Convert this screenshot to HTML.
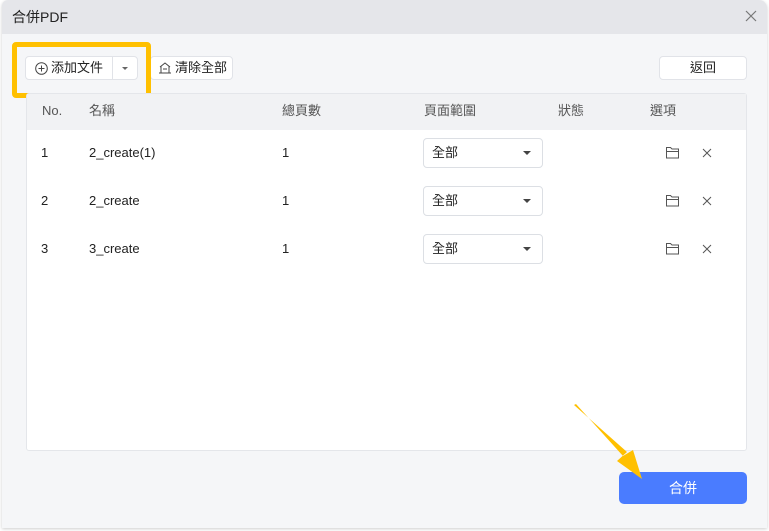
<!DOCTYPE html>
<html><head><meta charset="utf-8"><style>
*{box-sizing:border-box;margin:0;padding:0}
body{width:769px;height:531px;background:#fff;position:relative;overflow:hidden;font-family:"Liberation Sans","Noto Sans CJK TC",sans-serif;font-size:13px;color:#222}
.dlg{position:absolute;left:2px;top:0;width:765px;height:528px;background:#f5f6f8;border-radius:6px 8px 0 0;box-shadow:0 1px 3px rgba(0,0,0,.2);overflow:hidden}
.title{height:34px;background:#e5e6ea;padding:0 0 0 10px;line-height:34px;font-size:14px;color:#222}
.x{position:absolute;right:10px;top:10px;width:12px;height:12px}
.abs{position:absolute;line-height:16px}
.btn{position:absolute;background:#fff;border:1px solid #e1e3e8;border-radius:4px;font-size:13px;color:#222}
.tbl{position:absolute;left:26px;top:93px;width:721px;height:358px;background:#fff;border:1px solid #e4e6ea;border-radius:3px}
.hd{height:36px;background:#f1f2f4;color:#555}
.sel{position:absolute;width:120px;height:30px;border:1px solid #dcdfe4;border-radius:4px;background:#fff;padding-left:8px;line-height:28px}
.sel:after{content:"";position:absolute;right:11px;top:12px;border:4px solid transparent;border-top:4px solid #444;border-bottom:0}
.go{position:absolute;left:619px;top:472px;width:128px;height:32px;background:#4a7cff;border-radius:5px;color:#fff;text-align:center;line-height:32px;font-size:14px}
</style></head><body>
<div class="dlg">
<div class="title">合併PDF</div>
<svg class="x" viewBox="0 0 12 12"><path d="M1 1L11 11M11 1L1 11" stroke="#777" stroke-width="1.2"/></svg>
</div>
<div class="btn" style="left:25px;top:56px;width:113px;height:24px"></div>
<div class="abs" style="left:112px;top:57px;width:1px;height:22px;background:#e1e3e8"></div>
<svg class="abs" style="left:35px;top:62px" width="13" height="13" viewBox="0 0 13 13"><circle cx="6.5" cy="6.5" r="5.8" fill="none" stroke="#444" stroke-width="1"/><path d="M6.5 3.5v6M3.5 6.5h6" stroke="#444"/></svg>
<div class="abs" style="left:51px;top:60px">添加文件</div>
<div class="abs" style="left:122px;top:67px;border:3px solid transparent;border-top:3px solid #666;border-bottom:0"></div>
<div class="btn" style="left:150px;top:56px;width:83px;height:24px"></div>
<svg class="abs" style="left:158px;top:61px" width="14" height="13" viewBox="0 0 14 13"><path d="M2 6L7 2L12 6M3 5.5V12H11V5.5M1 12H13M5 8h4" fill="none" stroke="#444"/></svg>
<div class="abs" style="left:175px;top:60px">清除全部</div>
<div class="abs" style="left:12px;top:42px;width:139px;height:56px;border:5px solid #ffc000;border-radius:4px"></div>
<div class="btn" style="left:659px;top:56px;width:88px;height:24px;text-align:center;line-height:22px">返回</div>
<div class="tbl"><div class="hd"></div></div>
<div class="abs" style="left:42px;top:103px;color:#555">No.</div>
<div class="abs" style="left:89px;top:103px;color:#555">名稱</div>
<div class="abs" style="left:282px;top:103px;color:#555">總頁數</div>
<div class="abs" style="left:424px;top:103px;color:#555">頁面範圍</div>
<div class="abs" style="left:558px;top:103px;color:#555">狀態</div>
<div class="abs" style="left:650px;top:103px;color:#555">選項</div>

<div class="abs" style="left:41px;top:145px">1</div><div class="abs" style="left:89px;top:145px">2_create(1)</div><div class="abs" style="left:282px;top:145px">1</div>
<div class="sel" style="left:423px;top:138px">全部</div>
<div class="abs" style="left:41px;top:193px">2</div><div class="abs" style="left:89px;top:193px">2_create</div><div class="abs" style="left:282px;top:193px">1</div>
<div class="sel" style="left:423px;top:186px">全部</div>
<div class="abs" style="left:41px;top:241px">3</div><div class="abs" style="left:89px;top:241px">3_create</div><div class="abs" style="left:282px;top:241px">1</div>
<div class="sel" style="left:423px;top:234px">全部</div>

<svg class="abs" style="left:665px;top:146px" width="50" height="112" viewBox="0 0 50 112">
<g fill="none" stroke="#555" stroke-width="1">
<path d="M1.5 1.5h4l1.5 1.5h6.5v9h-12zM1.5 5.5h12"/>
<path d="M38 3l8 8M46 3l-8 8"/>
<path d="M1.5 49.5h4l1.5 1.5h6.5v9h-12zM1.5 53.5h12"/>
<path d="M38 51l8 8M46 51l-8 8"/>
<path d="M1.5 97.5h4l1.5 1.5h6.5v9h-12zM1.5 101.5h12"/>
<path d="M38 99l8 8M46 99l-8 8"/>
</g></svg>
<div class="go">合併</div>
<svg class="abs" style="left:0;top:0" width="769" height="531" viewBox="0 0 769 531">
<path d="M574 405L627 452L617 461L642 479L633 450L623 456L576 404Z" fill="#ffc000"/>
</svg>
</body></html>
